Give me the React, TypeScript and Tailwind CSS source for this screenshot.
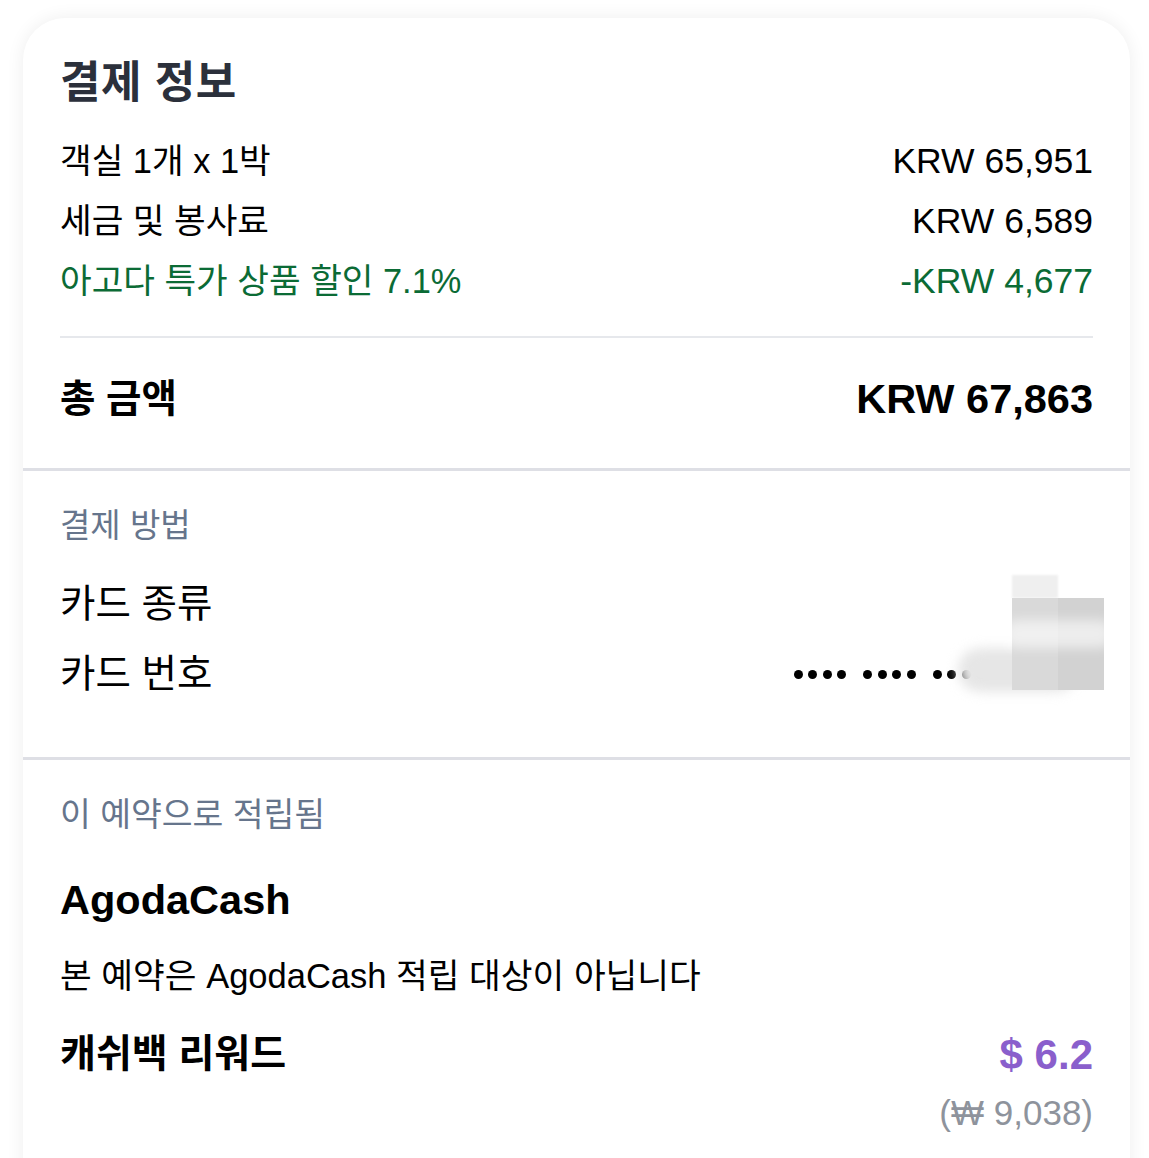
import React from 'react';

const lines = [
    { label: '객실 1개 x 1박', value: 'KRW 65,951', green: false },
    { label: '세금 및 봉사료', value: 'KRW 6,589', green: false },
    { label: '아고다 특가 상품 할인 7.1%', value: '-KRW 4,677', green: true },
];

function Dots() {
    return (
        <div className="flex items-center gap-[17px]">
            {[0, 1, 2].map(g => (
                <div key={g} className="flex items-center gap-[5.5px]">
                    {[0, 1, 2, 3].map(d => (
                        <span key={d} className="block w-[9px] h-[9px] rounded-full bg-black" />
                    ))}
                </div>
            ))}
            <div className="w-[91px]" />
        </div>
    );
}

export default function App() {
    return (
        <div className="min-h-[1158px] bg-white pt-[18px] pl-[23px] text-black [font-family:'Liberation_Sans','Noto_Sans_CJK_KR',sans-serif]">
            <div className="relative w-[1107px] bg-white rounded-t-[42px] shadow-[0_0_18px_rgba(0,0,0,0.07)]">
                {/* Payment info */}
                <div className="px-[37px] pt-[41px] pb-[44px]">
                    <h1 className="text-[44px] leading-[48px] tracking-[0.5px] font-bold text-[#2b303b]">결제 정보</h1>
                    <div className="mt-[25px]">
                        {lines.map(l => (
                            <div key={l.label} className={`flex items-center justify-between h-[60px] ${l.green ? 'text-[#0b6b35]' : 'text-black'}`}>
                                <span className="text-[34.4px]">{l.label}</span>
                                <span className="text-[35.5px]">{l.value}</span>
                            </div>
                        ))}
                    </div>
                    <div className="mt-[24px] h-[2px] bg-[#e6e8ec]" />
                    <div className="mt-[36px] flex items-center justify-between h-[50px] font-bold">
                        <span className="text-[38.5px]">총 금액</span>
                        <span className="text-[41.5px]">KRW 67,863</span>
                    </div>
                </div>

                <div className="h-[3px] bg-[#dedfe5]" />

                {/* Payment method */}
                <div className="px-[37px] pt-[35px] pb-[48px]">
                    <div className="text-[33px] leading-[40px] text-[#66758c]">결제 방법</div>
                    <div className="mt-[23px]">
                        <div className="flex items-center justify-between h-[70px]">
                            <span className="text-[38.5px]">카드 종류</span>
                        </div>
                        <div className="flex items-center justify-between h-[70px]">
                            <span className="text-[38.5px]">카드 번호</span>
                            <Dots />
                        </div>
                    </div>
                </div>

                <div className="h-[3px] bg-[#dedfe5]" />

                {/* Rewards */}
                <div className="px-[37px] pt-[35px] pb-[60px]">
                    <div className="text-[33.5px] leading-[40px] text-[#66758c]">이 예약으로 적립됨</div>
                    <div className="mt-[40px] text-[41.5px] leading-[50px] font-bold">AgodaCash</div>
                    <div className="mt-[29px] text-[34.5px] leading-[44px]">본 예약은 AgodaCash 적립 대상이 아닙니다</div>
                    <div className="mt-[31px] flex items-center justify-between h-[50px] font-bold">
                        <span className="text-[39px]">캐쉬백 리워드</span>
                        <span className="text-[42px] text-[#8a5fcc]">$ 6.2</span>
                    </div>
                    <div className="mt-[14px] text-right text-[35px] leading-[40px] text-[#8e939c]">(₩ 9,038)</div>
                </div>

                {/* Redacted card details */}
                <div className="absolute left-[935px] top-[630px] w-[120px] h-[44px] rounded-full bg-[#e6e6e6] blur-[6px]" />
                <div className="absolute left-[989px] top-[557px] w-[46px] h-[23px] bg-[#efefef] blur-[1px]" />
                <div className="absolute left-[989px] top-[580px] w-[46px] h-[92px] bg-[#d9d9d9]" />
                <div className="absolute left-[1035px] top-[580px] w-[46px] h-[92px] bg-[#d2d2d2]" />
                <div className="absolute left-[980px] top-[602px] w-[110px] h-[28px] rounded-full bg-white/60 blur-[6px]" />
            </div>
        </div>
    );
}
